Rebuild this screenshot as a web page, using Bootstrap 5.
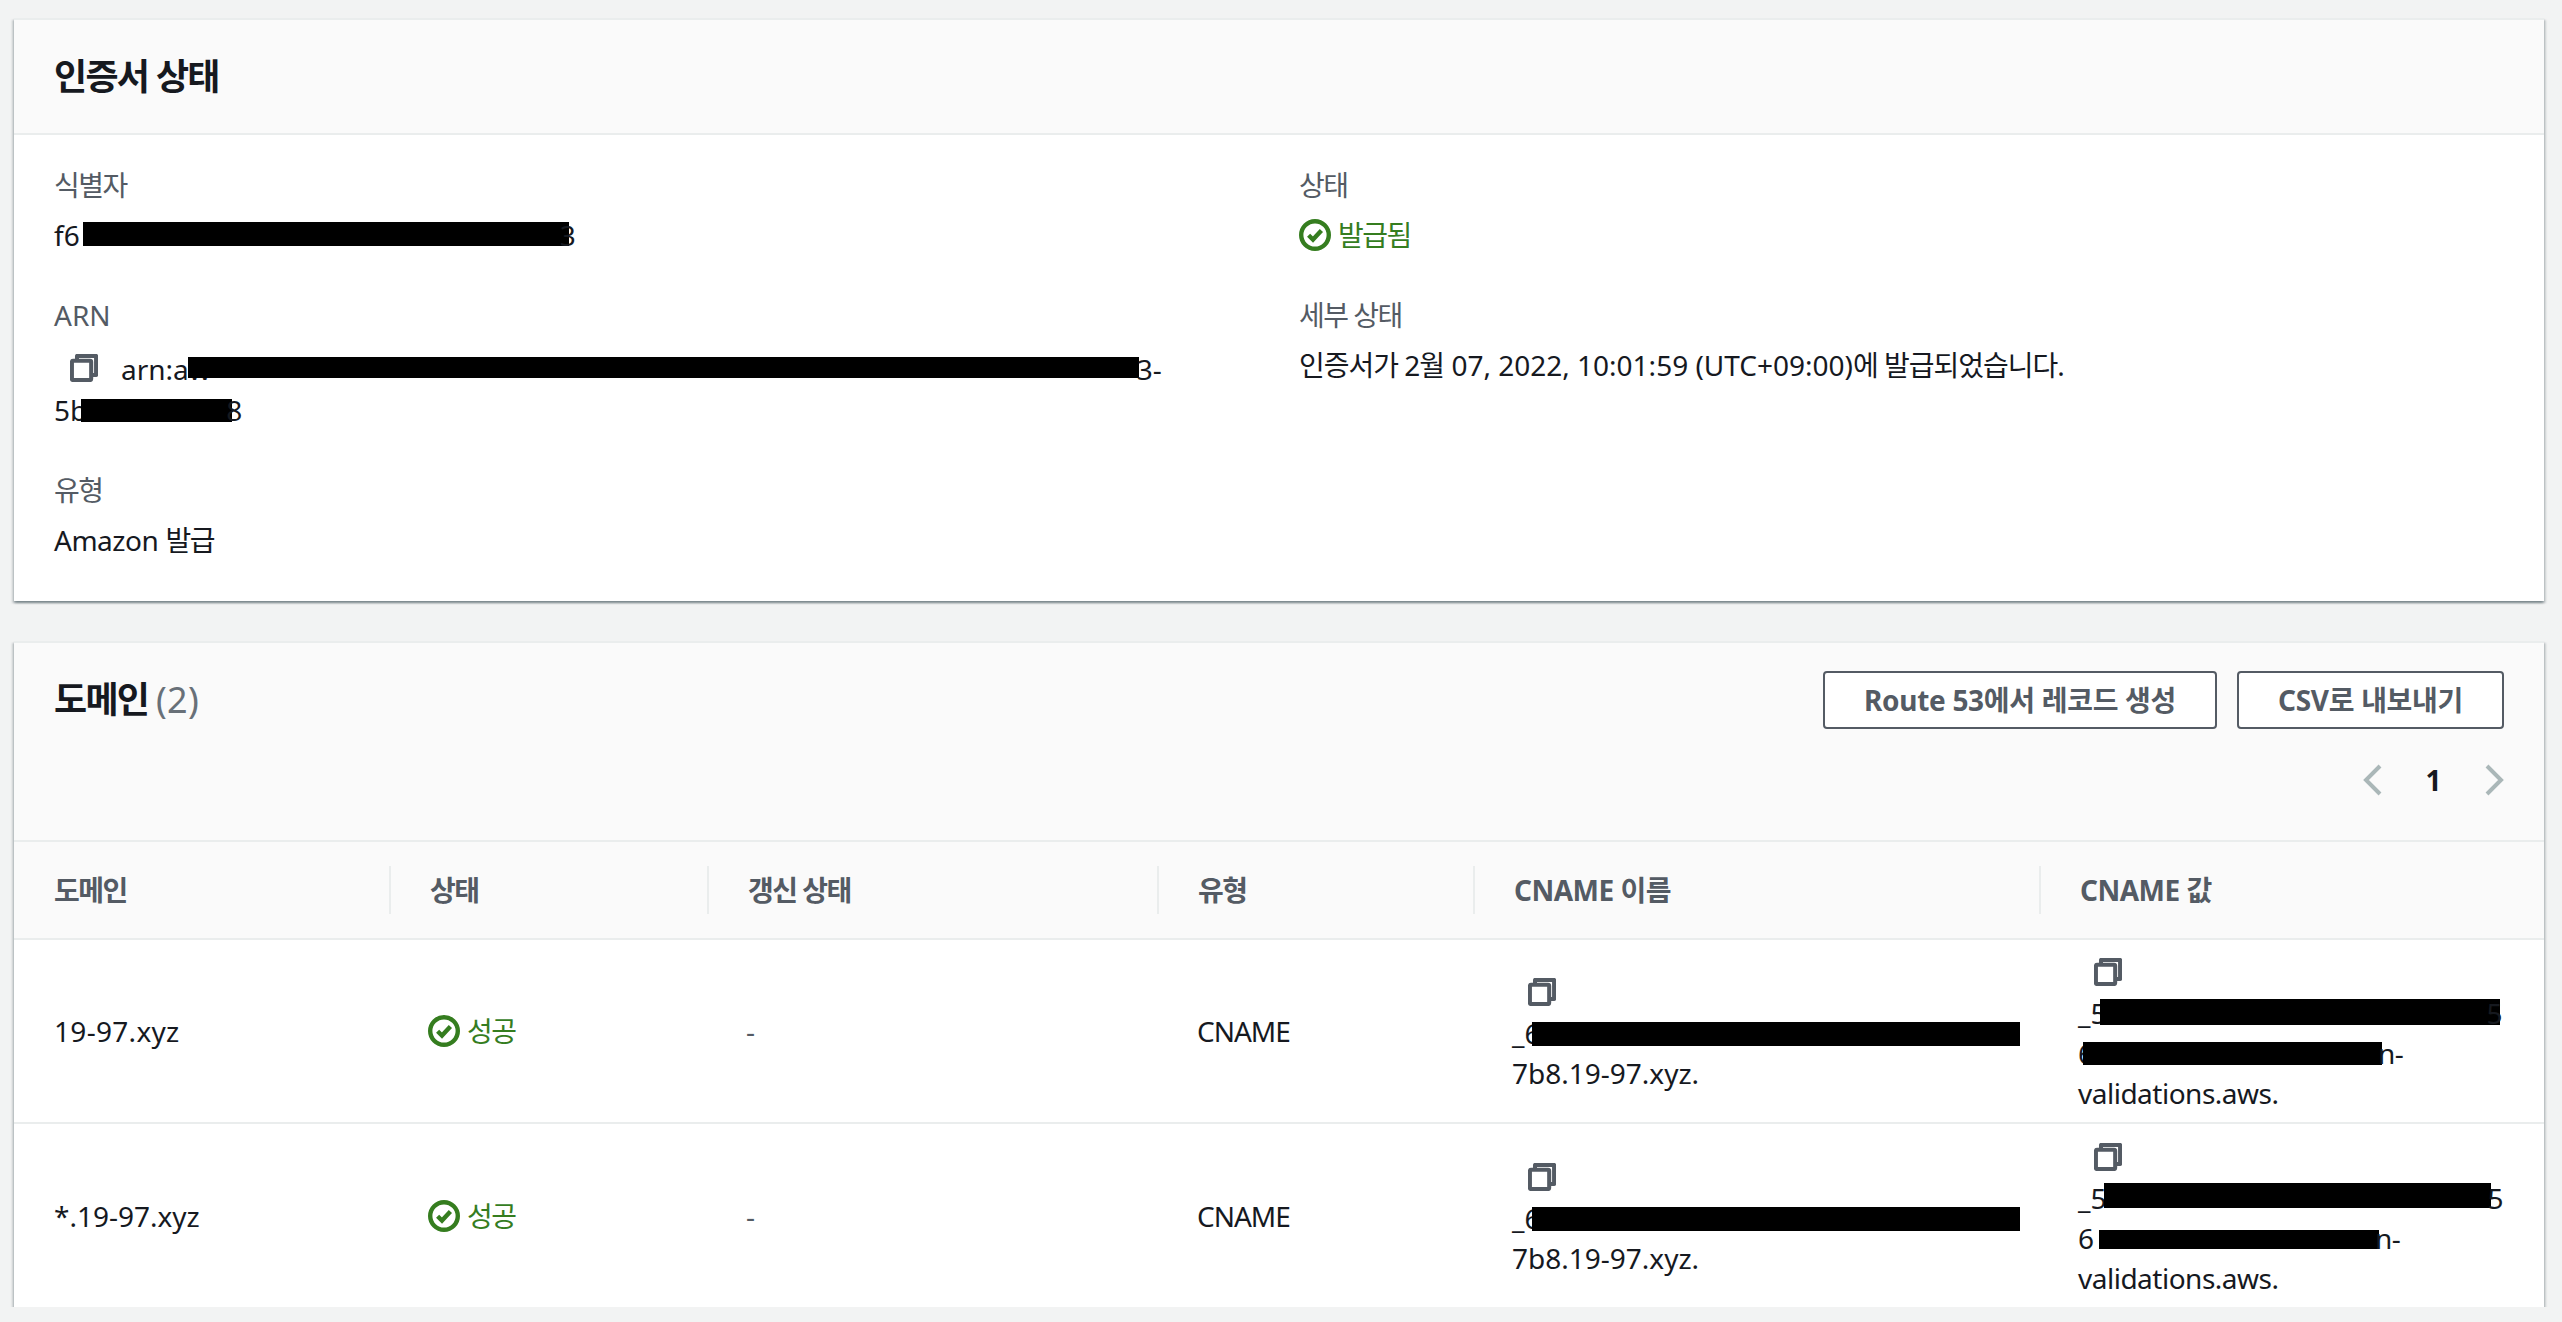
<!DOCTYPE html>
<html lang="ko">
<head>
<meta charset="utf-8">
<title>인증서 상태</title>
<link href="https://cdn.jsdelivr.net/npm/bootstrap@5.3.0/dist/css/bootstrap.min.css" rel="stylesheet">
<style>
html,body{background:#f2f3f3;}
body{font-family:"Noto Sans","Noto Sans CJK KR",sans-serif;font-size:28px;line-height:40px;color:#16191f;padding:18px 18px 0 14px;}
.pane{--bs-card-border-width:0;--bs-card-border-radius:0;--bs-card-inner-border-radius:0;--bs-card-color:#16191f;background:#fff;border-top:2px solid #eaeded;box-shadow:0 2px 2px rgba(0,28,36,.3),2px 2px 2px rgba(0,28,36,.15),-2px 2px 2px rgba(0,28,36,.15);}
.pane+.pane{margin-top:40px;}
.pane-head{--bs-card-cap-bg:#fafafa;background:#fafafa;border-bottom:2px solid #eaeded;padding:35px 40px 34px;}
.pane-head.tall{padding:28px 40px 40px;}
.pane-title{font-size:36px;line-height:44px;font-weight:700;margin:0;color:#16191f;letter-spacing:-1.7px;}
.pane-title.near{margin-top:7px;}
.pane-title span{font-weight:400;color:#687078;letter-spacing:.3px;}
.pane-body{--bs-card-spacer-y:0;--bs-card-spacer-x:0;padding:30px 40px 41px;}
.facts{--bs-gutter-x:40px;}
.fact+.fact{margin-top:40px;}
.fact-label{color:#545b64;height:40px;}
.fact-value{margin-top:10px;}
.kr{letter-spacing:-1.5px;}
.krs{letter-spacing:-1px;}
.lat-a{letter-spacing:-.5px;}
.lat-b{letter-spacing:-1px;}
.lat-c{letter-spacing:.3px;}
.ok{color:#357d1f;display:flex;align-items:center;gap:7px;}
.ok svg{width:32px;height:32px;flex:none;}
.copyic{width:28px;height:28px;flex:none;fill:none;stroke:#545b64;stroke-width:2.3;stroke-linejoin:round;}
.copy-row{display:flex;align-items:center;height:44px;padding:2px 0 0 16px;}
.arn-first{display:flex;align-items:center;height:45px;padding-left:16px;gap:23px;}
.arn-first span.txt{position:relative;top:1px;}
.rd{display:inline-block;background:#000;}
.rd-id{width:486px;height:24px;margin-left:3px;margin-right:-9px;vertical-align:0;}
.rd-arn{width:951px;height:21px;margin-left:-23px;margin-right:-2px;vertical-align:2px;}
.rd-arn2{width:151px;height:23px;margin-left:-6px;margin-right:-6px;vertical-align:-1px;}
.rd-c1{width:488px;height:24px;margin-left:-8px;vertical-align:-2px;}
.rd-v1{width:400px;height:26px;margin-left:-6px;margin-right:-14px;vertical-align:-1px;}
.rd-v2{width:299px;height:23px;margin-left:-11px;margin-right:-4px;vertical-align:-1px;}
.rd-v3{width:387px;height:25px;margin-left:-2px;margin-right:-4px;vertical-align:1px;}
.rd-v4{width:280px;height:19px;margin-left:5px;margin-right:-4px;vertical-align:0;}
.act{--bs-btn-color:#545b64;--bs-btn-border-color:#545b64;--bs-btn-bg:#fff;--bs-btn-font-size:28px;--bs-btn-font-weight:700;--bs-btn-line-height:36px;--bs-btn-padding-y:9px;--bs-btn-padding-x:39px;--bs-btn-border-width:2px;--bs-btn-border-radius:4px;--bs-btn-hover-color:#16191f;--bs-btn-hover-bg:#fafafa;--bs-btn-hover-border-color:#16191f;letter-spacing:-.3px;}
.action-set{gap:20px;}
.pager-row{display:flex;justify-content:flex-end;align-items:center;margin-top:31px;height:40px;}
.pager-row svg{width:20px;height:32px;fill:none;stroke:#aab7b8;stroke-width:4;}
.pager-num{font-weight:700;width:101px;text-align:center;}
.domain-table{--bs-table-bg:transparent;--bs-table-color:#16191f;--bs-table-border-color:#eaeded;table-layout:fixed;margin:0;width:100%;}
.domain-table thead th{background:#fafafa;padding:24px 0;border-bottom:2px solid #eaeded;font-weight:700;color:#545b64;}
.th-in{height:48px;line-height:48px;padding-left:39px;border-left:2px solid #eaeded;}
.domain-table thead th:first-child .th-in{border-left:0;padding-left:40px;}
.domain-table tbody td{padding:9px 0 9px 39px;vertical-align:middle;border-bottom:2px solid #eaeded;}
.domain-table tbody td:first-child{padding-left:40px;}
.domain-table tbody td:nth-child(4){padding-left:40px;}
.domain-table tbody tr:last-child td{border-bottom:0;padding-top:10px;}
.c1{width:375px;}.c2{width:318px;}.c3{width:450px;}.c4{width:316px;}.c5{width:566px;}.c6{width:505px;}
.dash{color:#545b64;}
</style>
</head>
<body>
<svg class="d-none" aria-hidden="true">
  <symbol id="copy" viewBox="0 0 16 16"><rect x="1.1" y="3.9" width="11" height="11" rx=".6"/><path d="M4 4V1.1h10.9V12h-3"/></symbol>
  <symbol id="okc" viewBox="0 0 16 16"><circle cx="8" cy="8" r="6.9" fill="none" stroke="#357d1f" stroke-width="2.2"/><path d="M4.8 8.1l2.2 2.2 4.2-4.5" fill="none" stroke="#357d1f" stroke-width="2.2"/></symbol>
</svg>

<section class="card pane">
  <div class="card-header pane-head"><h2 class="pane-title">인증서 상태</h2></div>
  <div class="card-body pane-body">
    <div class="row facts">
      <div class="col-6">
        <div class="fact">
          <div class="fact-label kr">식별자</div>
          <div class="fact-value">f6<span class="rd rd-id"></span>3</div>
        </div>
        <div class="fact">
          <div class="fact-label">ARN</div>
          <div class="fact-value">
            <div class="arn-first"><svg class="copyic"><use href="#copy"/></svg><span class="txt">arn:aw<span class="rd rd-arn"></span>3-</span></div>
            <div>5b<span class="rd rd-arn2"></span>8</div>
          </div>
        </div>
        <div class="fact">
          <div class="fact-label kr">유형</div>
          <div class="fact-value"><span class="lat-a">Amazon</span> <span class="kr">발급</span></div>
        </div>
      </div>
      <div class="col-6">
        <div class="fact">
          <div class="fact-label kr">상태</div>
          <div class="fact-value ok"><svg><use href="#okc"/></svg><span class="kr">발급됨</span></div>
        </div>
        <div class="fact">
          <div class="fact-label kr">세부 상태</div>
          <div class="fact-value"><span class="krs">인증서가 2월</span> 07, 2022, 10:01:59 (UTC+09:00)<span class="krs">에 발급되었습니다.</span></div>
        </div>
      </div>
    </div>
  </div>
</section>

<section class="card pane">
  <div class="card-header pane-head tall">
    <div class="d-flex justify-content-between align-items-start">
      <h2 class="pane-title near">도메인 <span>(2)</span></h2>
      <div class="d-flex action-set">
        <button type="button" class="btn act">Route 53에서 레코드 생성</button>
        <button type="button" class="btn act">CSV로 내보내기</button>
      </div>
    </div>
    <div class="pager-row">
      <svg viewBox="0 0 20 32"><path d="M17 2L3 16l14 14"/></svg>
      <span class="pager-num">1</span>
      <svg viewBox="0 0 20 32"><path d="M3 2l14 14L3 30"/></svg>
    </div>
  </div>
  <table class="table domain-table">
    <colgroup><col class="c1"><col class="c2"><col class="c3"><col class="c4"><col class="c5"><col class="c6"></colgroup>
    <thead>
      <tr>
        <th><div class="th-in kr">도메인</div></th>
        <th><div class="th-in kr">상태</div></th>
        <th><div class="th-in kr">갱신 상태</div></th>
        <th><div class="th-in kr">유형</div></th>
        <th><div class="th-in lat-a">CNAME 이름</div></th>
        <th><div class="th-in lat-a">CNAME 값</div></th>
      </tr>
    </thead>
    <tbody>
      <tr>
        <td class="lat-c">19-97.xyz</td>
        <td><div class="ok"><svg><use href="#okc"/></svg><span class="kr">성공</span></div></td>
        <td class="dash">-</td>
        <td class="lat-b">CNAME</td>
        <td>
          <div class="copy-row"><svg class="copyic"><use href="#copy"/></svg></div>
          <div>_6<span class="rd rd-c1"></span></div>
          <div>7b8.19-97.xyz.</div>
        </td>
        <td>
          <div class="copy-row"><svg class="copyic"><use href="#copy"/></svg></div>
          <div>_5<span class="rd rd-v1"></span>5</div>
          <div>6<span class="rd rd-v2"></span><span class="lat-a">n-</span></div>
          <div class="lat-a">validations.aws.</div>
        </td>
      </tr>
      <tr>
        <td>*.19-97.xyz</td>
        <td><div class="ok"><svg><use href="#okc"/></svg><span class="kr">성공</span></div></td>
        <td class="dash">-</td>
        <td class="lat-b">CNAME</td>
        <td>
          <div class="copy-row"><svg class="copyic"><use href="#copy"/></svg></div>
          <div>_6<span class="rd rd-c1"></span></div>
          <div>7b8.19-97.xyz.</div>
        </td>
        <td>
          <div class="copy-row"><svg class="copyic"><use href="#copy"/></svg></div>
          <div>_5<span class="rd rd-v3"></span>5</div>
          <div>6<span class="rd rd-v4"></span><span class="lat-a">n-</span></div>
          <div class="lat-a">validations.aws.</div>
        </td>
      </tr>
    </tbody>
  </table>
</section>
<script src="https://cdn.jsdelivr.net/npm/bootstrap@5.3.0/dist/js/bootstrap.bundle.min.js"></script>
</body>
</html>
